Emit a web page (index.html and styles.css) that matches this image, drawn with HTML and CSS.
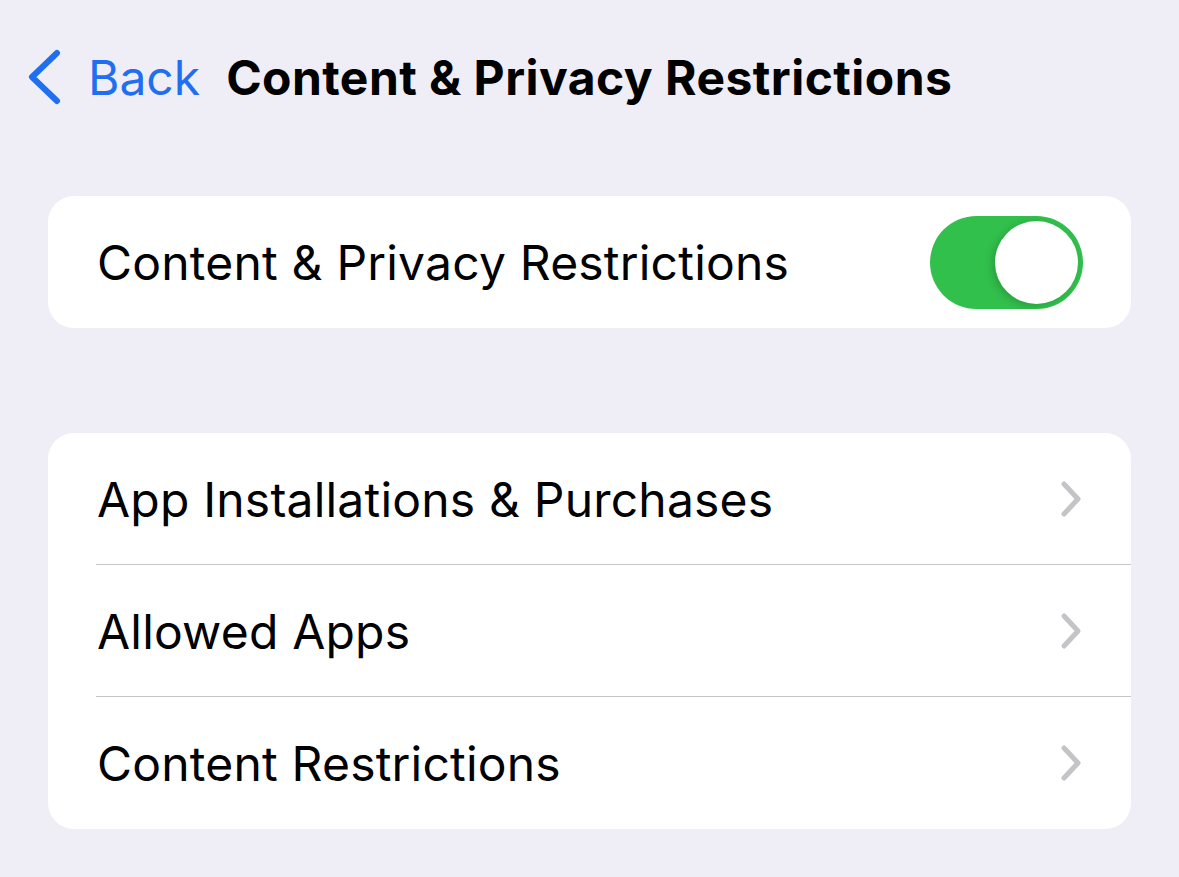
FILE: index.html
```html
<!DOCTYPE html>
<html lang="en">
  <head>
    <meta charset="UTF-8" />
    <meta name="viewport" content="width=device-width, initial-scale=1.0" />
    <title>Content &amp; Privacy Restrictions</title>
    <link rel="stylesheet" href="styles.css">
  </head>
  <body>
    <div class="nav">
      <a class="back" href="#">
        <svg class="back-icon" width="38" height="56" viewBox="0 0 38 56">
          <path d="M32 4 L7 28 L32 52" fill="none" stroke="#1f6ff0" stroke-width="6" stroke-linecap="round" stroke-linejoin="round" />
        </svg>
        <span>Back</span>
      </a>
      <h1 class="title">Content &amp; Privacy Restrictions</h1>
    </div>

    <div class="group">
      <div class="row">
        <span class="label">Content &amp; Privacy Restrictions</span>
        <div class="switch on"><div class="knob"></div></div>
      </div>
    </div>

    <div class="group list">
      <a class="row link" href="#">
        <span class="label">App Installations &amp; Purchases</span>
        <svg class="chevron" width="24" height="38" viewBox="0 0 24 38">
          <path d="M5 4 L19 19 L5 34" fill="none" stroke="#c3c3c8" stroke-width="5" stroke-linecap="round" stroke-linejoin="round" />
        </svg>
      </a>
      <a class="row link" href="#">
        <span class="label">Allowed Apps</span>
        <svg class="chevron" width="24" height="38" viewBox="0 0 24 38">
          <path d="M5 4 L19 19 L5 34" fill="none" stroke="#c3c3c8" stroke-width="5" stroke-linecap="round" stroke-linejoin="round" />
        </svg>
      </a>
      <a class="row link" href="#">
        <span class="label">Content Restrictions</span>
        <svg class="chevron" width="24" height="38" viewBox="0 0 24 38">
          <path d="M5 4 L19 19 L5 34" fill="none" stroke="#c3c3c8" stroke-width="5" stroke-linecap="round" stroke-linejoin="round" />
        </svg>
      </a>
    </div>
  </body>
</html>
```

FILE: styles.css
```css
* {
  box-sizing: border-box;
  font-family: Inter, "Noto Sans", sans-serif;
}
body {
  margin: 0;
  background-color: #efeef6;
  color: #000;
}
.nav {
  display: flex;
  align-items: center;
  height: 156px;
  padding-left: 25px;
  padding-bottom: 2px;
}
.back {
  display: flex;
  align-items: center;
  gap: 25px;
  color: #1f6ff0;
  text-decoration: none;
  font-size: 48px;
  margin-right: 26px;
}
.title {
  margin: 0;
  font-size: 48px;
  font-weight: 700;
  letter-spacing: 0.45px;
}
.group {
  margin: 40px 48px 0 48px;
  background-color: #fff;
  border-radius: 26px;
  overflow: hidden;
}
.list {
  margin-top: 105px;
}
.row {
  display: flex;
  align-items: center;
  justify-content: space-between;
  height: 132px;
  padding: 0 48px 0 49px;
  color: #000;
  text-decoration: none;
  position: relative;
}
.label {
  font-size: 48px;
  letter-spacing: 0.2px;
}
.link + .link::before {
  content: "";
  position: absolute;
  top: -1px;
  left: 48px;
  right: 0;
  height: 1px;
  background-color: #c6c6c8;
}
.switch {
  width: 153px;
  height: 93px;
  border-radius: 47px;
  background-color: #32c04c;
  padding: 5px;
  display: flex;
  justify-content: flex-end;
}
.knob {
  width: 83px;
  height: 83px;
  border-radius: 50%;
  background-color: #fff;
  box-shadow: -3px 2px 8px rgba(0, 0, 0, 0.18);
}
```
